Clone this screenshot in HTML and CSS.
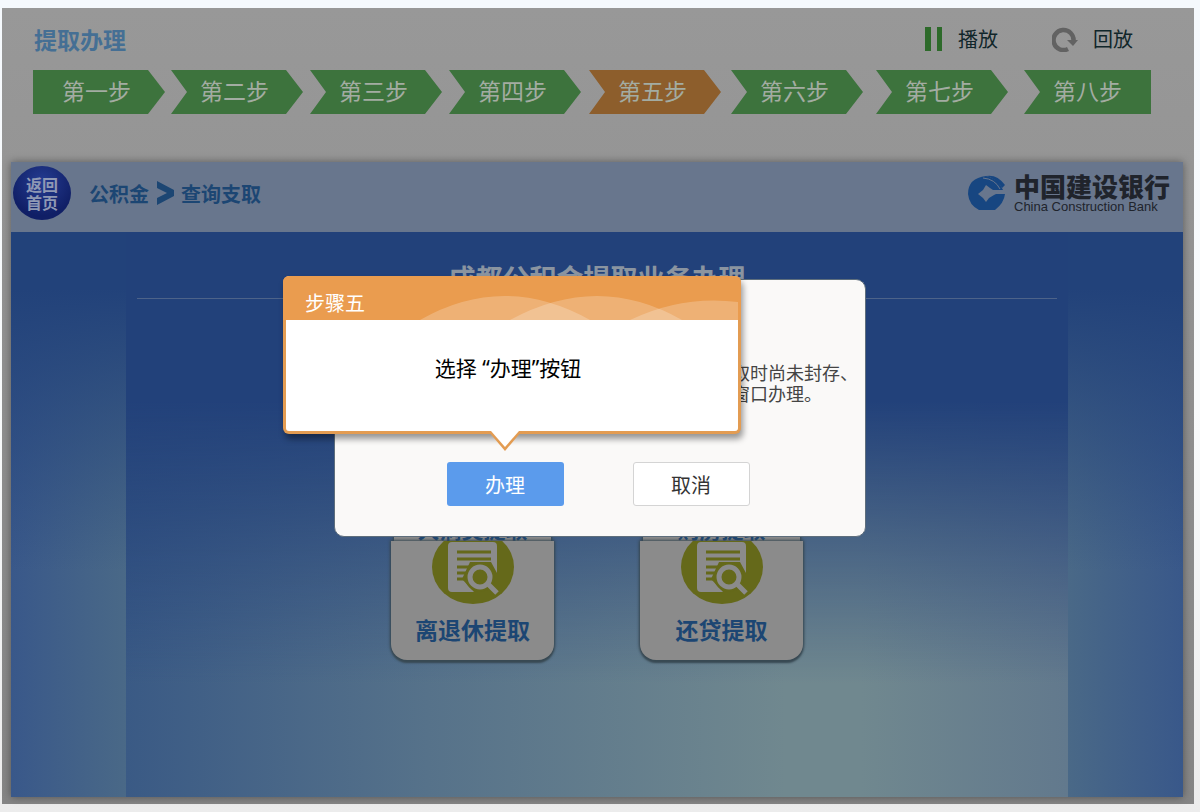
FILE: index.html
```html
<!DOCTYPE html>
<html lang="zh-CN">
<head>
  <meta charset="UTF-8" />
  <meta name="viewport" content="width=device-width, initial-scale=1.0"/>
  <title>提取办理</title>
  <link rel="stylesheet" href="styles.css">
</head>
<body>
  <div class="stage">
    <!-- Title and player controls -->
    <header class="topbar">
      <h1>提取办理</h1>
      <div class="controls">
        <button type="button" class="control">
          <svg width="18" height="24" viewBox="0 0 18 24"><path d="M0 0h6v24H0zM12 0h5v24h-5z" fill="#2d6a2a"/></svg>
          播放
        </button>
        <button type="button" class="control replay">
          <svg width="26" height="26" viewBox="0 0 26 26">
            <path d="M16 23A10 10 0 1 1 21.500 15" fill="none" stroke="#626262" stroke-width="4.500"/>
            <path d="M15 14h11l-5 6z" fill="#626262"/>
          </svg>
          回放
        </button>
      </div>
    </header>

    <!-- Steps -->
    <nav class="steps">
      <a class="step first" href="#step1">第一步</a>
      <a class="step" href="#step2">第二步</a>
      <a class="step" href="#step3">第三步</a>
      <a class="step" href="#step4">第四步</a>
      <a class="step current" href="#step5">第五步</a>
      <a class="step" href="#step6">第六步</a>
      <a class="step" href="#step7">第七步</a>
      <a class="step last" href="#step8">第八步</a>
    </nav>

    <!-- Kiosk screen -->
    <main class="kiosk">
      <div class="kiosk-bar">
        <button type="button" class="home">返回<br>首页</button>
        <div class="crumbs">
          <a href="#fund">公积金</a>
          <svg width="18" height="24" viewBox="0 0 18 24"><path d="M1 0L18 9v6L1 24v-7l10-5L1 7z" fill="#1c4673"/></svg>
          <span>查询支取</span>
        </div>
        <div class="bank">
          <svg width="38" height="36" viewBox="0 0 38 36">
            <path d="M18 1Q0 3 0 19Q1 30 11 35H27Q36 28 37 19H28L26 20 21 23 18 27 15 23 10 19 15 15 18 10 22 13 25 15H35Q30 3 18 1z" fill="#174681"/>
            <path d="M15 3Q27 4 32 14" fill="none" stroke="#68768d" stroke-width="1"/>
            <path d="M18 1Q29-1 37 10L34 13Q28 3 18 1z" fill="#174681"/>
          </svg>
          <div>
            <strong>中国建设银行</strong>
            <span>China Construction Bank</span>
          </div>
        </div>
      </div>

      <div class="kiosk-body">
        <section class="panel">
          <h2>成都公积金提取业务办理</h2>
          <div class="cards back">
            <div class="card"><span>大病类提取</span></div>
            <div class="card"><span>购房提取</span></div>
          </div>
          <div class="cards">
            <a class="card" href="#retire">
              <svg width="82" height="64" viewBox="0 0 82 64">
                <ellipse cx="41" cy="26" rx="41" ry="37" fill="#65691a"/>
                <path d="M16 5q0-4 4-4h41q4 0 4 4v27l-6-11H38L30 38l12 13H20q-4 0-4-4z" fill="#8b8b8b"/>
                <path d="M25 11h34M25 18h34M25 26h16M25 32h10M25 38h7" stroke="#65691a" stroke-width="3"/>
                <circle cx="48" cy="36" r="15" fill="#65691a"/>
                <circle cx="48" cy="36" r="10" fill="none" stroke="#8b8b8b" stroke-width="5"/>
                <path d="M56 43l9 9" stroke="#8b8b8b" stroke-width="5"/>
              </svg>
              <span>离退休提取</span>
            </a>
            <a class="card" href="#loan">
              <svg width="82" height="64" viewBox="0 0 82 64">
                <ellipse cx="41" cy="26" rx="41" ry="37" fill="#65691a"/>
                <path d="M16 5q0-4 4-4h41q4 0 4 4v27l-6-11H38L30 38l12 13H20q-4 0-4-4z" fill="#8b8b8b"/>
                <path d="M25 11h34M25 18h34M25 26h16M25 32h10M25 38h7" stroke="#65691a" stroke-width="3"/>
                <circle cx="48" cy="36" r="15" fill="#65691a"/>
                <circle cx="48" cy="36" r="10" fill="none" stroke="#8b8b8b" stroke-width="5"/>
                <path d="M56 43l9 9" stroke="#8b8b8b" stroke-width="5"/>
              </svg>
              <span>还贷提取</span>
            </a>
          </div>
        </section>

        <!-- Confirm dialog -->
        <div class="dialog" role="dialog">
          <p>取时尚未封存、<br>窗口办理。</p>
          <div class="dialog-buttons">
            <button type="button" class="ok">办理</button>
            <button type="button" class="cancel">取消</button>
          </div>
        </div>

        <!-- Step hint -->
        <div class="hint">
          <div class="hint-head">
            <h3>步骤五</h3>
            <svg class="waves" width="318" height="26" viewBox="0 0 318 26">
              <g fill="#fff" fill-opacity="0.22">
                <path d="M0 26Q84-22 170 26z"/>
                <path d="M90 26Q178-22 262 26z"/>
                <path d="M210 26Q262 1 318 8V26z"/>
              </g>
            </svg>
          </div>
          <p>选择 “办理”按钮</p>
          <svg class="tail" width="34" height="22" viewBox="0 0 34 22">
            <path d="M0 0L17 20 34 0z" fill="#e39c52"/>
            <path d="M3 0L17 16 31 0z" fill="#fff"/>
          </svg>
        </div>
      </div>
    </main>
  </div>
</body>
</html>
```
FILE: styles.css
```css
* {
  box-sizing: border-box;
}

body {
  margin: 0;
  padding: 8px 6px 8px 2px;
  min-height: 100vh;
  display: flex;
  font-family: "Noto Sans CJK SC", sans-serif;
  background: linear-gradient(#f5f9fd, #f8fafb 50%, #ececec);
}

h1, h2, h3, p {
  margin: 0;
}

a {
  color: inherit;
  text-decoration: none;
}

button {
  padding: 0;
  border: none;
  background: none;
  font-family: inherit;
  cursor: pointer;
}

svg {
  display: block;
  flex: none;
}

.stage {
  flex: 1;
  display: flex;
  flex-direction: column;
  padding: 0 11px 7px 9px;
  background: linear-gradient(#989898, #959595 20%, #858585);
}

/* Title row */
.topbar {
  display: flex;
  align-items: center;
  justify-content: space-between;
  height: 62px;
  padding: 0 50px 0 23px;
}

.topbar h1 {
  font-size: 23px;
  line-height: 32px;
  font-weight: 700;
  color: #456f94;
}

.controls {
  display: flex;
  gap: 54px;
}

.control {
  display: flex;
  align-items: center;
  gap: 15px;
  font-size: 20px;
  line-height: 28px;
  color: #10262a;
}

/* Arrow steps */
.steps {
  display: grid;
  grid-template-columns: 138fr 139fr 139fr 140fr 142fr 145fr 148fr 127fr;
  margin: 0 32px 48px 22px;
}

.step {
  width: 132px;
  height: 44px;
  padding-left: 29px;
  font-size: 23px;
  line-height: 40px;
  color: #a3aca2;
  background-color: #3d733d;
  clip-path: polygon(0 0, 115px 0, 100% 50%, 115px 100%, 0 100%, 16px 50%);
}

.step.first {
  clip-path: polygon(0 0, 115px 0, 100% 50%, 115px 100%, 0 100%);
}

.step.last {
  width: 100%;
  clip-path: polygon(0 0, 100% 0, 100% 100%, 0 100%, 16px 50%);
}

.step.current {
  background-color: #8d5e2c;
}

/* Kiosk screen */
.kiosk {
  flex: 1;
  display: flex;
  flex-direction: column;
  box-shadow: 0 0 8px rgba(0, 0, 0, 0.4);
}

.kiosk-bar {
  display: flex;
  align-items: center;
  height: 70px;
  padding: 0 2px 8px 2px;
  background-color: #68768d;
}

.home {
  width: 58px;
  height: 54px;
  border-radius: 50%;
  font-size: 16px;
  line-height: 18px;
  font-weight: 700;
  color: #8f98b4;
  background: radial-gradient(circle at 50% 30%, #253c92, #101f66 70%);
}

.crumbs {
  display: flex;
  align-items: center;
  gap: 7px;
  margin-left: 18px;
  font-size: 20px;
  font-weight: 700;
  color: #1c4673;
}

.bank {
  display: flex;
  align-items: center;
  gap: 8px;
  margin-left: auto;
  color: #20242c;
}

.bank div {
  width: 167px;
}

.bank strong,
.bank span {
  display: block;
}

.bank strong {
  font-size: 26px;
  line-height: 28px;
  font-weight: 900;
}

.bank span {
  font-family: "Liberation Sans", sans-serif;
  font-size: 13px;
  line-height: 14px;
}

.kiosk-body {
  position: relative;
  flex: 1;
  display: flex;
  justify-content: center;
  background:
    linear-gradient(#22427a 10%, rgba(34, 66, 122, 0) 60%),
    linear-gradient(90deg, #39588a, #4a6987 10%, #4a6987 90%, #39588a);
}

.panel {
  width: 80.4%;
  padding: 30px 11px 0;
  background:
    linear-gradient(#22417a 30%, rgba(34, 65, 122, 0) 80%),
    linear-gradient(90deg, #3a5a85, #56728a 32%, #70888f 70%, #70888f 78%, #62798d);
}

.panel h2 {
  height: 37px;
  border-bottom: 1px solid #4d6389;
  font-size: 27px;
  line-height: 32px;
  font-weight: 700;
  text-align: center;
  color: #8a94a0;
}

.cards {
  display: flex;
  justify-content: center;
  gap: 86px;
}

.card {
  display: flex;
  flex-direction: column;
  align-items: center;
  width: 163px;
  height: 119px;
  border-radius: 0 0 16px 16px;
  font-size: 23px;
  line-height: 32px;
  font-weight: 700;
  color: #1c4673;
  background-color: #8b8b8b;
  box-shadow: 0 3px 2px #384953, 0 0 3px 1px #384953;
}

.card span {
  margin-top: 8px;
}

.cards.back {
  gap: 92px;
  margin-top: 205px;
  height: 37px;
  overflow: hidden;
}

.cards.back .card {
  width: 157px;
  font-size: 22px;
}

/* Confirm dialog */
.dialog {
  position: absolute;
  top: 47px;
  left: calc(50% - 263px);
  display: flex;
  flex-direction: column;
  width: 532px;
  height: 258px;
  padding: 82px 4px 30px 0;
  border: 1px solid #5e6e7c;
  border-radius: 10px;
  background-color: #faf9f8;
}

.dialog p {
  padding-left: 397px;
  font-size: 18px;
  line-height: 21px;
  white-space: nowrap;
  color: #444;
}

.dialog-buttons {
  display: flex;
  justify-content: center;
  gap: 69px;
  margin-top: auto;
}

.dialog-buttons button {
  width: 117px;
  height: 44px;
  border-radius: 3px;
  font-size: 20px;
}

.ok {
  color: #fff;
  background-color: #5b9bec;
}

.dialog-buttons .cancel {
  border: 1px solid #d4d4d4;
  color: #333;
  background-color: #fff;
}

/* Step hint */
.hint {
  position: absolute;
  top: 44px;
  left: calc(50% - 314px);
  width: 458px;
  height: 158px;
  border: 3px solid #e39c52;
  border-top: none;
  border-radius: 6px;
  background-color: #fff;
  box-shadow: 2px 5px 6px rgba(0, 0, 0, 0.4);
}

.hint-head {
  display: flex;
  align-items: flex-end;
  justify-content: space-between;
  height: 44px;
  margin: 0 -3px;
  padding: 0 3px 0 22px;
  border-radius: 6px 6px 0 0;
  background-color: #ea9c4f;
}

.hint h3 {
  font-size: 20px;
  line-height: 34px;
  font-weight: 400;
  color: #fff;
}

.hint p {
  padding: 34px 8px 0 0;
  font-family: "Noto Sans", "Noto Sans CJK SC", sans-serif;
  font-size: 21px;
  line-height: 28px;
  text-align: center;
  color: #000;
}

.tail {
  position: absolute;
  top: 155px;
  left: 202px;
}
```
